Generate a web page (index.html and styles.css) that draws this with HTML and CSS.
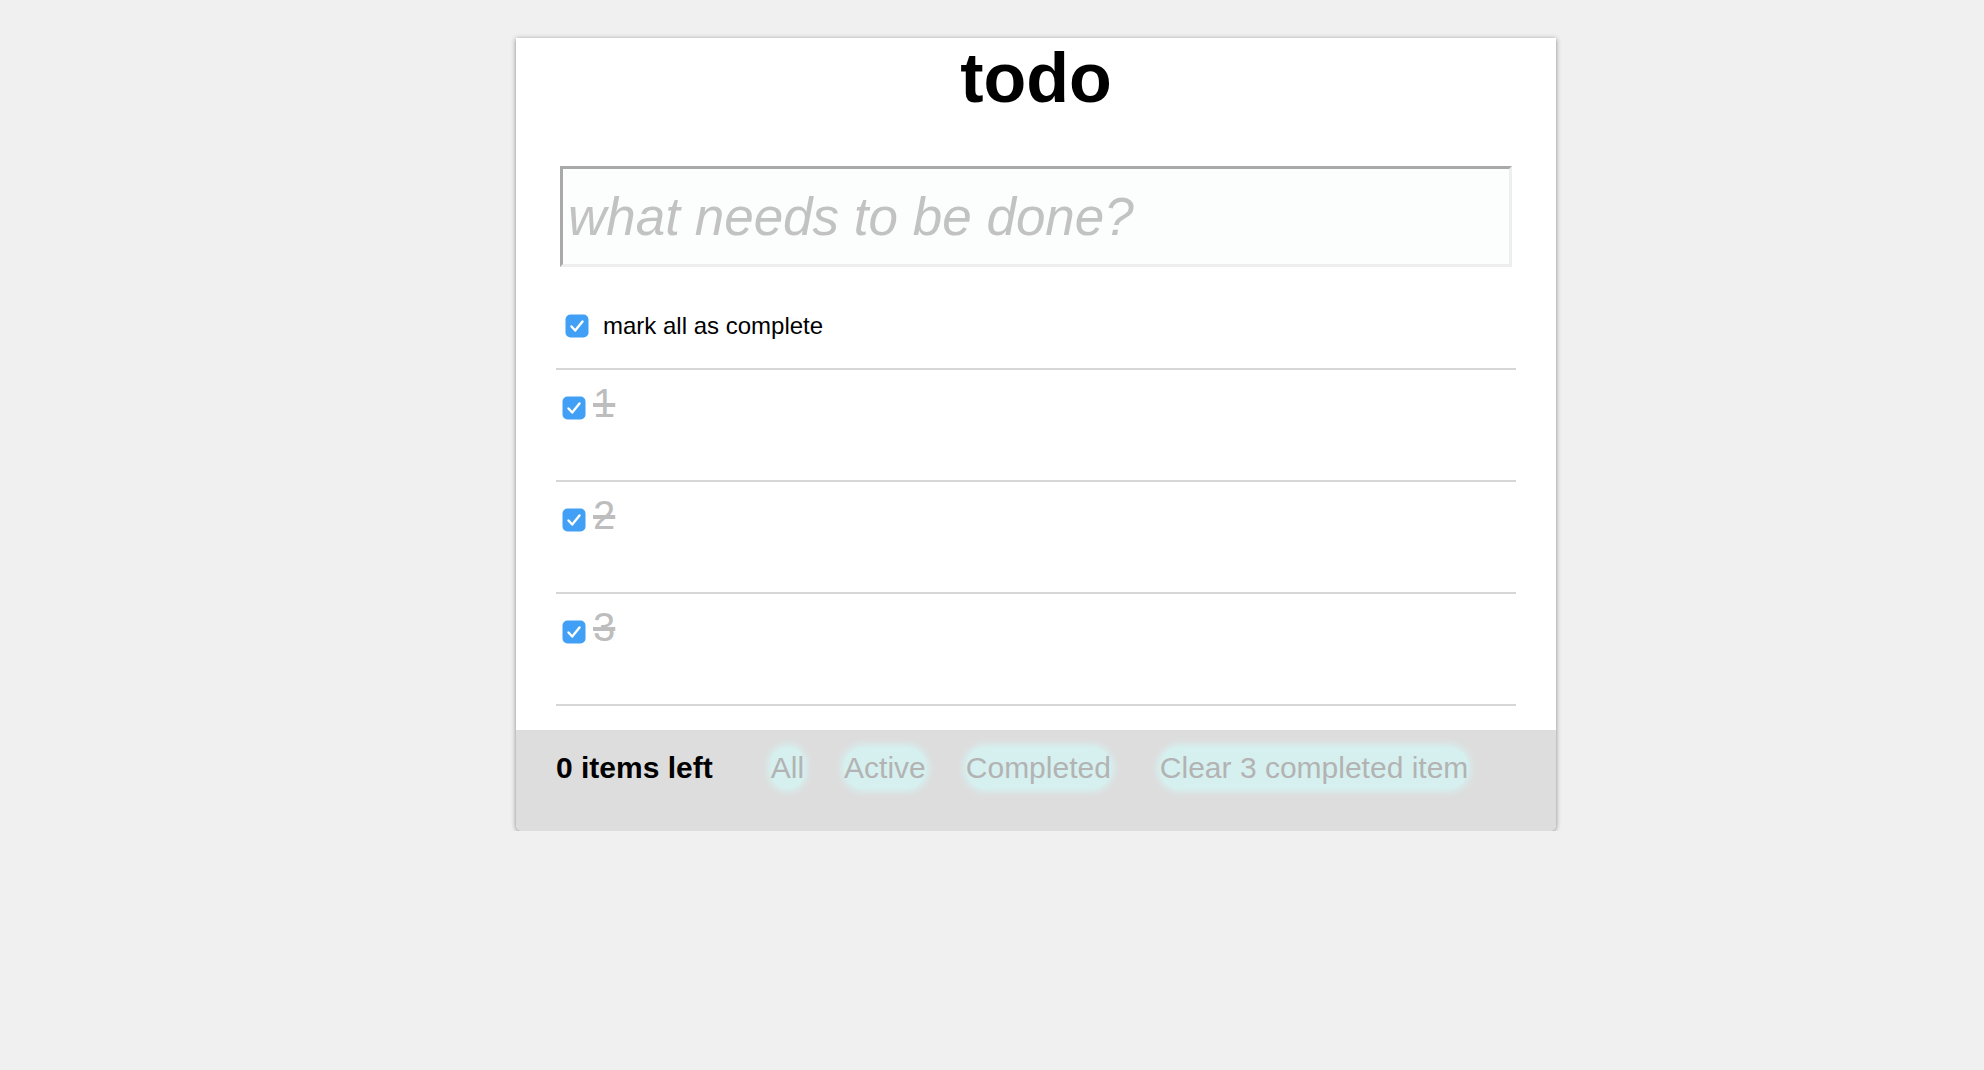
FILE: index.html
```html
<!DOCTYPE html>
<html>
<head>
<meta charset="utf-8">
<link rel="stylesheet" href="styles.css">
</head>
<body>
<section class="card">
  <h1 class="title">todo</h1>
  <div class="main">
    <input class="new-todo" type="text" placeholder="what needs to be done?">
    <label class="mark-all">
      <span class="check"><svg viewBox="0 0 24 24" width="24" height="24"><rect x="0.5" y="0.5" width="23" height="23" rx="5" fill="#41a0f6"/><path d="M6.5 12.5 L10.2 16.5 L17.5 7.5" fill="none" stroke="#fff" stroke-width="2.4" stroke-linecap="round" stroke-linejoin="round"/></svg></span>
      <span class="mark-label">mark all as complete</span>
    </label>
    <ul class="list">
      <li class="item">
        <span class="check item-check"><svg viewBox="0 0 24 24" width="24" height="24"><rect x="0.5" y="0.5" width="23" height="23" rx="5" fill="#41a0f6"/><path d="M6.5 12.5 L10.2 16.5 L17.5 7.5" fill="none" stroke="#fff" stroke-width="2.4" stroke-linecap="round" stroke-linejoin="round"/></svg></span>
        <span class="item-text">1</span>
      </li>
      <li class="item">
        <span class="check item-check"><svg viewBox="0 0 24 24" width="24" height="24"><rect x="0.5" y="0.5" width="23" height="23" rx="5" fill="#41a0f6"/><path d="M6.5 12.5 L10.2 16.5 L17.5 7.5" fill="none" stroke="#fff" stroke-width="2.4" stroke-linecap="round" stroke-linejoin="round"/></svg></span>
        <span class="item-text">2</span>
      </li>
      <li class="item">
        <span class="check item-check"><svg viewBox="0 0 24 24" width="24" height="24"><rect x="0.5" y="0.5" width="23" height="23" rx="5" fill="#41a0f6"/><path d="M6.5 12.5 L10.2 16.5 L17.5 7.5" fill="none" stroke="#fff" stroke-width="2.4" stroke-linecap="round" stroke-linejoin="round"/></svg></span>
        <span class="item-text">3</span>
      </li>
    </ul>
  </div>
  <footer class="footer">
    <span class="count">0 items left</span>
    <span class="filters">
      <a class="pill">All</a>
      <a class="pill">Active</a>
      <a class="pill">Completed</a>
    </span>
    <a class="pill clear">Clear 3 completed item</a>
  </footer>
</section>
</body>
</html>
```
FILE: styles.css
```css
html, body {
  margin: 0;
  padding: 0;
  background: #f0f0f0;
  font-family: "Liberation Sans", Arial, sans-serif;
}

.card {
  width: 1040px;
  margin: 38px 0 0 516px;
  background: #ffffff;
  border-radius: 0 0 6px 6px;
  box-shadow: 0 1px 5px rgba(0, 0, 0, 0.45);
}

.title {
  margin: 0;
  font-size: 70px;
  font-weight: bold;
  line-height: 80px;
  text-align: center;
  color: #000;
}

.main {
  padding: 48px 40px 24px;
}

.new-todo {
  display: block;
  box-sizing: border-box;
  width: 952px;
  height: 101px;
  margin: 0 4px;
  padding: 0 5px;
  border-style: solid;
  border-width: 3px;
  border-color: #a9a9a9 #eeeeee #eeeeee #a9a9a9;
  background: #fcfefe;
  font-family: "Liberation Sans", Arial, sans-serif;
  font-size: 53px;
  font-style: italic;
  color: #333;
  outline: none;
}

.new-todo::placeholder {
  color: #c2c2c2;
  font-style: italic;
}

.mark-all {
  display: flex;
  align-items: center;
  padding: 45px 0 28px 9px;
  font-size: 24px;
  color: #000;
}

.check {
  display: block;
  width: 24px;
  height: 24px;
  flex: none;
}

.check svg {
  display: block;
}

.mark-label {
  margin-left: 14px;
  line-height: 28px;
}

.list {
  list-style: none;
  margin: 0;
  padding: 0;
  border-bottom: 2px solid #d6d6d6;
}

.item {
  display: flex;
  align-items: flex-start;
  box-sizing: border-box;
  height: 112px;
  padding: 10px 0 0 6px;
  border-top: 2px solid #d6d6d6;
}

.item-check {
  margin-top: 16px;
  margin-right: 7px;
}

.item-text {
  font-size: 40px;
  line-height: 46px;
  color: #bdbdbd;
  text-decoration: line-through;
}

.footer {
  display: flex;
  align-items: baseline;
  box-sizing: border-box;
  height: 101px;
  padding: 17px 40px 0;
  background: #dddddd;
  border-radius: 0 0 6px 6px;
  font-size: 30px;
}

.count {
  font-weight: bold;
  color: #000;
  line-height: 42px;
  margin-right: 58px;
}

.filters {
  display: flex;
  gap: 40px;
}

.pill {
  display: inline-block;
  line-height: 42px;
  color: #b3b3b3;
  background: #d6f0f0;
  border-radius: 20px;
  box-shadow: 0 0 6px 3px #d6f0f0;
  text-decoration: none;
}

.clear {
  margin-left: 49px;
}
```
